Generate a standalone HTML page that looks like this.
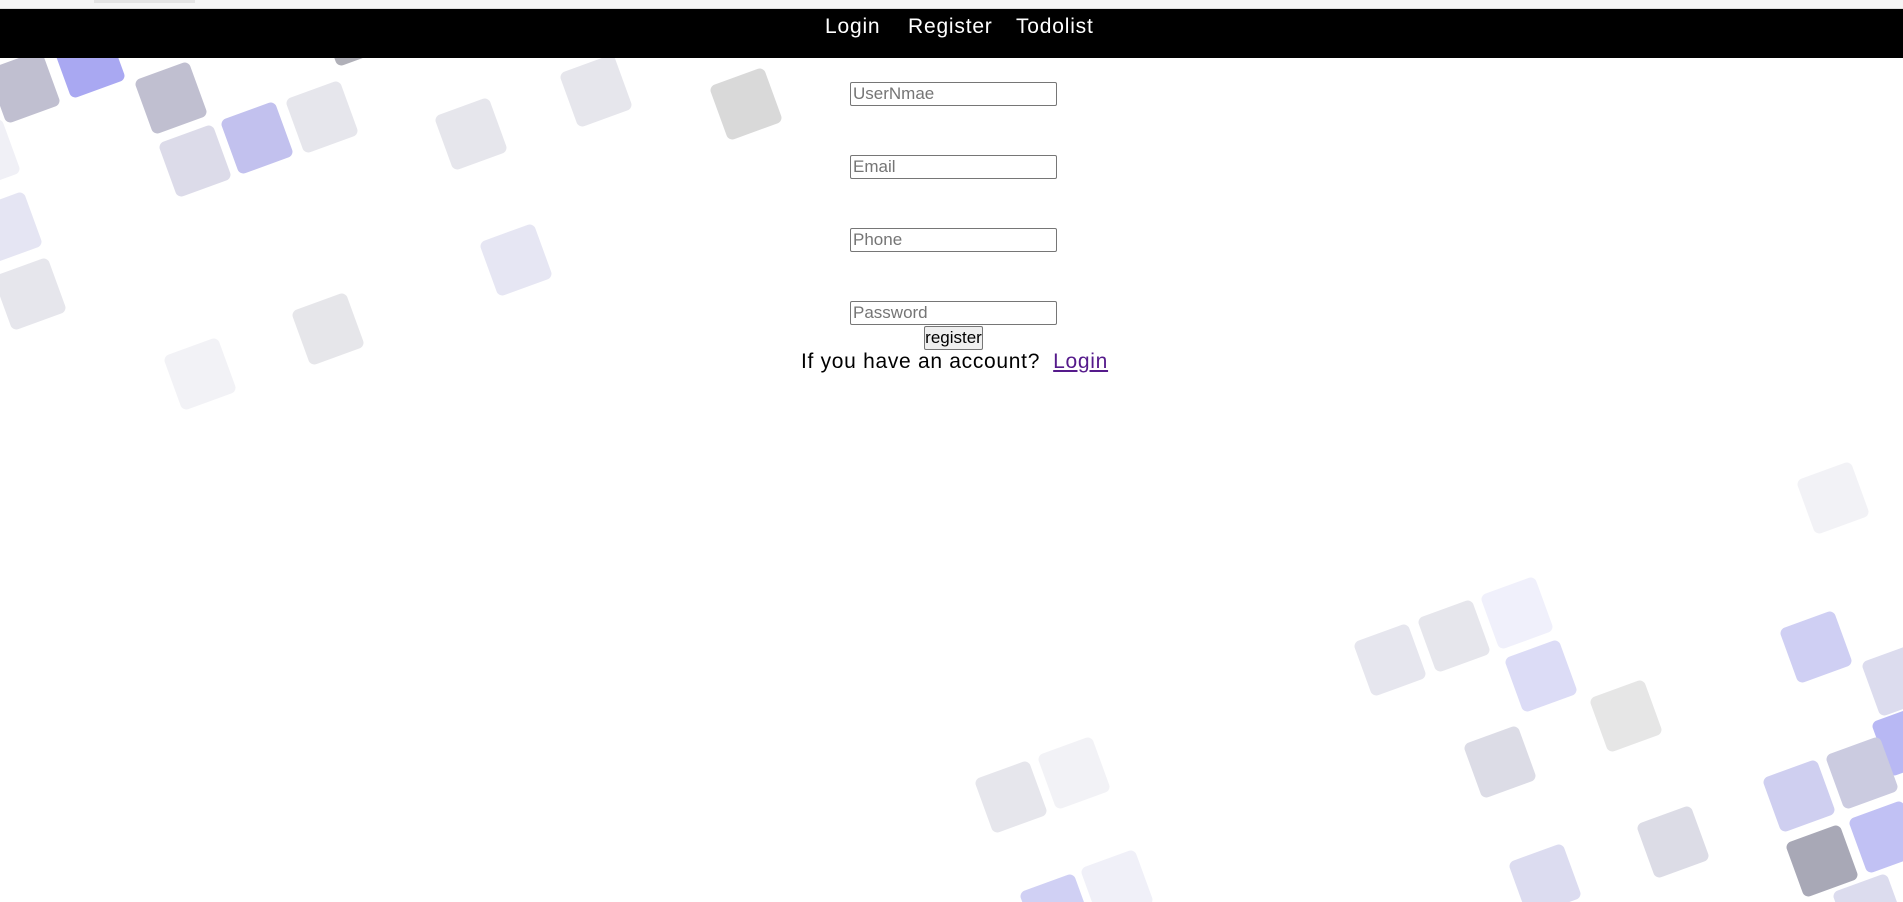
<!DOCTYPE html>
<html><head><meta charset="utf-8"><style>
html,body{margin:0;padding:0;width:1903px;height:902px;overflow:hidden;background:#fff;font-family:"Liberation Sans",sans-serif;position:relative}
.top{position:absolute;left:0;top:0;width:1903px;height:8px;background:#f5f5f5;border-bottom:1px solid #ddd;z-index:6}
.tab{position:absolute;left:94px;top:0;width:101px;height:3px;background:#e4e4e4}
nav{position:absolute;left:0;top:9px;width:1903px;height:49px;background:#000;z-index:5}
nav a{position:absolute;top:6px;color:#fff;font-size:21px;text-decoration:none;letter-spacing:0.8px}
.sq{position:absolute;width:58px;height:58px;border-radius:6px;transform:rotate(-20deg);margin:-29px 0 0 -29px}
input{position:absolute;left:850px;width:207px;height:24px;box-sizing:border-box;border:1px solid #767676;border-radius:2px;font-size:17px;padding:0 2px;font-family:"Liberation Sans",sans-serif;z-index:3;background:#fff}
input::placeholder{color:#757575}
button{position:absolute;left:924px;top:326px;width:59px;height:24px;font-size:17px;padding:0;border:1px solid #767676;border-radius:2px;background:#efefef;font-family:"Liberation Sans",sans-serif;z-index:3}
.acc{position:absolute;left:801px;top:350px;font-size:21px;color:#000;z-index:3;white-space:nowrap;letter-spacing:0.7px}
.acc a{color:#551a8b;text-decoration:underline}
</style></head><body>
<div class="top"><div class="tab"></div></div>
<nav><a style="left:825px">Login</a><a style="left:908px">Register</a><a style="left:1016px">Todolist</a></nav>

<div class="sq" style="left:24px;top:87px;background:#c0bfd0"></div>
<div class="sq" style="left:89px;top:62px;background:#a9a8f2"></div>
<div class="sq" style="left:171px;top:98px;background:#c0bfd0"></div>
<div class="sq" style="left:195px;top:161px;background:#dcdbe9"></div>
<div class="sq" style="left:257px;top:138px;background:#c2c1ee"></div>
<div class="sq" style="left:322px;top:117px;background:#e6e6ec"></div>
<div class="sq" style="left:355px;top:30px;background:#b0b0b8"></div>
<div class="sq" style="left:471px;top:134px;background:#e6e6ec"></div>
<div class="sq" style="left:596px;top:91px;background:#e6e6ec"></div>
<div class="sq" style="left:746px;top:104px;background:#d9d9d9"></div>
<div class="sq" style="left:-16px;top:155px;background:#f0f0f6"></div>
<div class="sq" style="left:6px;top:228px;background:#e5e5f3"></div>
<div class="sq" style="left:30px;top:294px;background:#e6e6ec"></div>
<div class="sq" style="left:516px;top:260px;background:#e6e6f3"></div>
<div class="sq" style="left:328px;top:329px;background:#e6e6ea"></div>
<div class="sq" style="left:200px;top:374px;background:#f2f2f6"></div>

<div class="sq" style="left:1833px;top:498px;background:#f2f2f6"></div>
<div class="sq" style="left:1390px;top:660px;background:#e6e6ee"></div>
<div class="sq" style="left:1454px;top:636px;background:#e6e6ec"></div>
<div class="sq" style="left:1517px;top:613px;background:#f0f0fb"></div>
<div class="sq" style="left:1541px;top:676px;background:#dcdcf6"></div>
<div class="sq" style="left:1626px;top:716px;background:#e6e6e6"></div>
<div class="sq" style="left:1500px;top:762px;background:#dcdce6"></div>
<div class="sq" style="left:1816px;top:647px;background:#cfcff3"></div>
<div class="sq" style="left:1898px;top:680px;background:#dcdcee"></div>
<div class="sq" style="left:1908px;top:740px;background:#b8b8f4"></div>
<div class="sq" style="left:1799px;top:796px;background:#cfcff0"></div>
<div class="sq" style="left:1862px;top:773px;background:#cbcbe0"></div>
<div class="sq" style="left:1885px;top:837px;background:#c1c1f4"></div>
<div class="sq" style="left:1822px;top:861px;background:#a8a8b6"></div>
<div class="sq" style="left:1673px;top:842px;background:#dcdce6"></div>
<div class="sq" style="left:1545px;top:880px;background:#dcdcf0"></div>
<div class="sq" style="left:1869px;top:910px;background:#dcdcee"></div>
<div class="sq" style="left:1011px;top:797px;background:#e6e6ec"></div>
<div class="sq" style="left:1074px;top:773px;background:#f2f2f6"></div>
<div class="sq" style="left:1056px;top:910px;background:#d0d0f4"></div>
<div class="sq" style="left:1117px;top:886px;background:#f0f0f8"></div>

<input style="top:82px" placeholder="UserNmae">
<input style="top:155px" placeholder="Email">
<input style="top:228px" placeholder="Phone">
<input style="top:301px" placeholder="Password">
<button>register</button>
<div class="acc">If you have an account?&nbsp; <a>Login</a></div>
</body></html>
